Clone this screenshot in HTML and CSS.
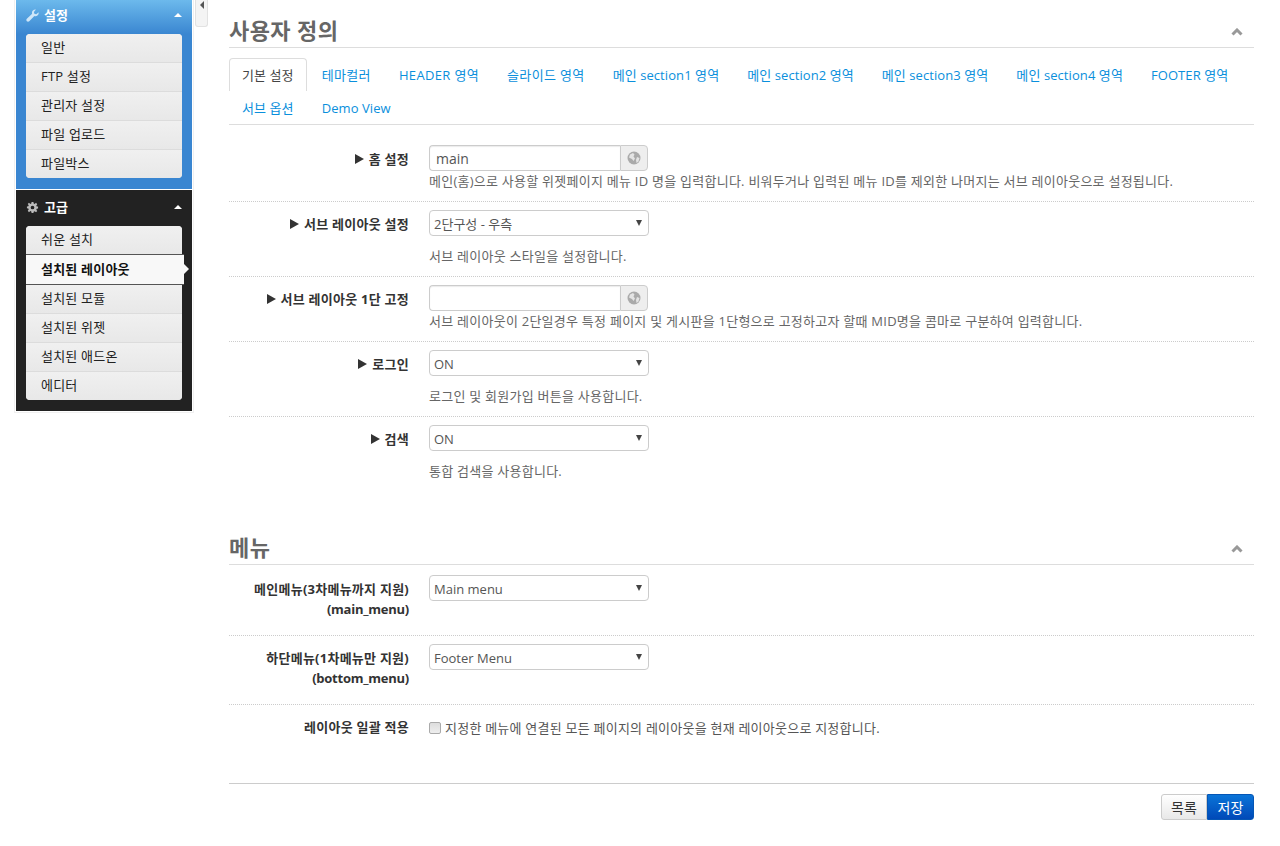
FILE: index.html
```html
<!DOCTYPE html>
<html lang="ko">
<head>
<meta charset="utf-8">
<title>사용자 정의</title>
<link rel="stylesheet" href="styles.css">
</head>
<body>
<div class="page">
  <aside class="sidebar">
    <section class="nav-group nav-blue">
      <div class="nav-head">
        <svg class="nav-icon" viewBox="0 0 14 14"><path d="M13.6 3.4c.2 1.300-.2 2.500-1 3.300-1 1-2.400 1.200-3.600.8l-5.500 5.700c-.7.700-1.900.7-2.600 0s-.7-1.900 0-2.600l5.700-5.500c-.4-1.200-.2-2.600.8-3.600.8-.8 2-1.200 3.300-1L8.500 3.200l.5 2 2 .5z" fill="#cfe6f8"/></svg>
        <span class="nav-title">설정</span>
        <i class="nav-caret"></i>
      </div>
      <ul class="nav-menu">
        <li>일반</li>
        <li>FTP 설정</li>
        <li>관리자 설정</li>
        <li>파일 업로드</li>
        <li>파일박스</li>
      </ul>
    </section>
    <section class="nav-group nav-dark">
      <div class="nav-head">
        <svg class="nav-icon" viewBox="0 0 14 14"><path fill-rule="evenodd" d="M6 1h2l.3 1.700 1 .4L10.800 2l1.300 1.400-1 1.400.4 1 1.500.2v2l-1.500.3-.4 1 1 1.400-1.300 1.400-1.500-1-1 .4L8 13H6l-.3-1.700-1-.4L3.200 12l-1.300-1.400 1-1.400-.4-1L1 7.900v-2l1.500-.2.4-1-1-1.400L3.200 2l1.500 1.100 1-.4zM7 5a2 2 0 1 0 0 4 2 2 0 0 0 0-4z" fill="#bbb"/></svg>
        <span class="nav-title">고급</span>
        <i class="nav-caret"></i>
      </div>
      <ul class="nav-menu">
        <li>쉬운 설치</li>
        <li class="active">설치된 레이아웃</li>
        <li>설치된 모듈</li>
        <li>설치된 위젯</li>
        <li>설치된 애드온</li>
        <li>에디터</li>
      </ul>
    </section>
  </aside>
  <div class="collapse-handle"><i></i></div>
  <main class="content">
    <section class="section">
      <header class="section-head">
        <h2>사용자 정의</h2>
        <svg class="section-toggle" viewBox="0 0 12 8"><path d="M1.500 6.500 6 2l4.500 4.500" fill="none" stroke="#999" stroke-width="3"/></svg>
      </header>
      <nav class="tabs">
        <a class="tab current">기본 설정</a>
        <a class="tab tab-ko">테마컬러</a>
        <a class="tab tab-ko">HEADER 영역</a>
        <a class="tab tab-ko">슬라이드 영역</a>
        <a class="tab">메인 section1 영역</a>
        <a class="tab">메인 section2 영역</a>
        <a class="tab">메인 section3 영역</a>
        <a class="tab">메인 section4 영역</a>
        <a class="tab">FOOTER 영역</a>
        <a class="tab">서브 옵션</a>
        <a class="tab">Demo View</a>
      </nav>
      <div class="row">
        <label class="row-label"><i class="mark"></i>홈 설정</label>
        <div class="row-field">
          <div class="input-group">
            <input class="text-input" type="text" value="main">
            <span class="addon"><svg viewBox="0 0 14 14"><circle cx="7" cy="7" r="6.500" fill="#aaa"/><path d="M3 3.500 6 2l1.500 1.500-1 2L8 7.500 6.500 10 5 8 2 6.500zM10 6l2.500 1-1 3.500L9.500 12l-.5-3z" fill="#e4e4e4"/></svg></span>
          </div>
          <p class="help">메인(홈)으로 사용할 위젯페이지 메뉴 ID 명을 입력합니다. 비워두거나 입력된 메뉴 ID를 제외한 나머지는 서브 레이아웃으로 설정됩니다.</p>
        </div>
      </div>
      <div class="row">
        <label class="row-label"><i class="mark"></i>서브 레이아웃 설정</label>
        <div class="row-field">
          <span class="select-wrap"><select class="select"><option>2단구성 - 우측</option></select></span>
          <p class="help">서브 레이아웃 스타일을 설정합니다.</p>
        </div>
      </div>
      <div class="row">
        <label class="row-label"><i class="mark"></i>서브 레이아웃 1단 고정</label>
        <div class="row-field">
          <div class="input-group">
            <input class="text-input" type="text" value="">
            <span class="addon"><svg viewBox="0 0 14 14"><circle cx="7" cy="7" r="6.500" fill="#aaa"/><path d="M3 3.500 6 2l1.500 1.500-1 2L8 7.500 6.500 10 5 8 2 6.500zM10 6l2.500 1-1 3.500L9.500 12l-.5-3z" fill="#e4e4e4"/></svg></span>
          </div>
          <p class="help">서브 레이아웃이 2단일경우 특정 페이지 및 게시판을 1단형으로 고정하고자 할때 MID명을 콤마로 구분하여 입력합니다.</p>
        </div>
      </div>
      <div class="row">
        <label class="row-label"><i class="mark"></i>로그인</label>
        <div class="row-field">
          <span class="select-wrap"><select class="select"><option>ON</option></select></span>
          <p class="help">로그인 및 회원가입 버튼을 사용합니다.</p>
        </div>
      </div>
      <div class="row">
        <label class="row-label"><i class="mark"></i>검색</label>
        <div class="row-field">
          <span class="select-wrap"><select class="select"><option>ON</option></select></span>
          <p class="help">통합 검색을 사용합니다.</p>
        </div>
      </div>
    </section>
    <section class="section section-menu">
      <header class="section-head">
        <h2>메뉴</h2>
        <svg class="section-toggle" viewBox="0 0 12 8"><path d="M1.500 6.500 6 2l4.500 4.500" fill="none" stroke="#999" stroke-width="3"/></svg>
      </header>
      <div class="row row-tall">
        <label class="row-label">메인메뉴(3차메뉴까지 지원)<br><span class="label-id">(main_menu)</span></label>
        <div class="row-field">
          <span class="select-wrap"><select class="select"><option>Main menu</option></select></span>
        </div>
      </div>
      <div class="row row-tall">
        <label class="row-label">하단메뉴(1차메뉴만 지원)<br><span class="label-id">(bottom_menu)</span></label>
        <div class="row-field">
          <span class="select-wrap"><select class="select"><option>Footer Menu</option></select></span>
        </div>
      </div>
      <div class="row">
        <label class="row-label">레이아웃 일괄 적용</label>
        <div class="row-field">
          <label class="check-line"><input class="check" type="checkbox">지정한 메뉴에 연결된 모든 페이지의 레이아웃을 현재 레이아웃으로 지정합니다.</label>
        </div>
      </div>
    </section>
    <footer class="actions">
      <button class="btn" type="button">목록</button>
      <button class="btn btn-primary" type="button">저장</button>
    </footer>
  </main>
</div>
</body>
</html>
```
FILE: styles.css
```css
* { box-sizing: border-box; }
html, body { margin: 0; padding: 0; height: 846px; overflow: hidden; background: #fff; }
body {
  font-family: "Open Sans", "Noto Sans CJK KR", sans-serif;
  font-size: 13px;
  line-height: 20px;
  color: #333;
}
.page { display: flex; align-items: flex-start; padding-left: 16px; }

/* sidebar */
.sidebar { width: 176px; flex: none; box-shadow: 0 0 0 1px #fff, 0 0 0 2px #f0f0f0; }
.nav-group { padding-bottom: 11px; }
.nav-blue { background: linear-gradient(#6cb9ec 0, #3a86d1 34px); height: 189px; margin-bottom: 1px; }
.nav-dark { background: #222; height: 221px; }
.nav-head { display: flex; align-items: center; height: 30px; margin-bottom: 4px; padding: 0 10px; color: #fff; font-weight: 700; }
.nav-dark .nav-head { height: 34px; margin-bottom: 2px; }
.nav-icon { width: 13px; height: 13px; margin-right: 5px; flex: none; }
.nav-title { flex: 1; }
.nav-caret { width: 0; height: 0; border: 4px solid transparent; border-bottom-color: #fff; border-top: 0; margin-right: 0; }
.nav-menu {
  list-style: none; margin: 0 10px; padding: 0;
  border-radius: 4px;
  background: linear-gradient(#f1f1f1, #e6e6e6);
}
.nav-menu li {
  height: 29px; line-height: 27px; padding-left: 15px; letter-spacing: .2px;
  color: #222; border-bottom: 1px solid #dcdcdc;
  background: linear-gradient(#f0f0f0, #e8e8e8);
}
.nav-menu li:first-child { border-radius: 4px 4px 0 0; }
.nav-menu li:last-child { height: 28px; border-bottom: 0; border-radius: 0 0 4px 4px; }
.nav-menu li.active {
  position: relative; margin-right: -2px; height: 31px; margin-top: -1px; line-height: 28px;
  background: #f8f8f8; font-weight: 700; color: #111;
  border-top: 1px solid #555; border-bottom: 1px solid #555;
}
.nav-menu li.active::after {
  content: ""; position: absolute; right: -5px; top: 9px; width: 0; height: 0;
  border-left: 5px solid #f8f8f8; border-top: 5px solid transparent; border-bottom: 5px solid transparent;
}

.collapse-handle {
  width: 13px; height: 27px; margin-left: 3px; flex: none;
  background: #f4f4f4; border: 1px solid #e2e2e2; border-top: 0; border-radius: 0 0 3px 3px;
  display: flex; justify-content: center; padding-top: 1px;
}
.collapse-handle i { width: 0; height: 0; border: 4px solid transparent; border-right: 4px solid #555; border-left: 0; height: 8px; }

/* content */
.content { width: 1025px; margin-left: 21px; flex: none; padding-top: 16px; }
.section-head {
  display: flex; justify-content: space-between; align-items: center;
  height: 32px; border-bottom: 1px solid #ddd;
}
.section-head h2 { margin: 0 0 4px; font-size: 22px; line-height: 30px; font-weight: 700; color: #666; letter-spacing: .4px; }
.section-toggle { width: 12px; height: 8px; margin-right: 11px; }
.tabs {
  display: flex; flex-wrap: wrap; align-content: flex-start; margin-top: 10px; height: 67px;
  border-bottom: 1px solid #ddd;
}
.tab {
  height: 33px; padding: 6px 12px 0; border: 1px solid transparent; border-bottom: 0;
  margin-right: 2px; color: #0a8fdc; white-space: nowrap; letter-spacing: .08px;
}
.tab-ko { letter-spacing: .35px; }
.tab.current { color: #444; border-color: #ddd; border-radius: 4px 4px 0 0; }

.row { display: flex; padding: 8px 0 10px; border-top: 1px dotted #ccc; }
.tabs + .row { border-top: 0; margin-top: 12px; }
.section-head + .row { border-top: 0; margin-top: 2px; }
.row-label { width: 180px; flex: none; padding-top: 4px; text-align: right; font-weight: 700; color: #333; white-space: nowrap; letter-spacing: .25px; }
.label-id { letter-spacing: -.25px; }
.row-field { margin-left: 20px; flex: 1; min-width: 0; }
.mark {
  display: inline-block; width: 0; height: 0; margin-right: 5px;
  border-left: 9px solid #333; border-top: 5px solid transparent; border-bottom: 5px solid transparent;
}
.row-tall { padding-bottom: 16px; }

.input-group { display: flex; width: 219px; height: 26px; }
.text-input {
  width: 191px; height: 26px; padding: 0 6px; margin: 0;
  font: 14px "Open Sans", sans-serif; color: #555;
  border: 1px solid #ccc; border-right: 0; border-radius: 4px 0 0 4px; outline: 0;
  box-shadow: inset 0 1px 1px rgba(0,0,0,.08);
}
.addon {
  width: 28px; display: flex; align-items: center; justify-content: center;
  background: #eee; border: 1px solid #ccc; border-radius: 0 4px 4px 0;
}
.addon svg { width: 14px; height: 14px; }
.help { margin: 0; color: #666; white-space: nowrap; letter-spacing: .25px; }
.select-wrap { position: relative; display: block; width: 220px; height: 26px; margin-bottom: 10px; }
.select-wrap::after {
  content: ""; position: absolute; right: 7px; top: 10px; width: 0; height: 0;
  border-top: 6px solid #444; border-left: 3px solid transparent; border-right: 3px solid transparent;
}
.select {
  display: block; width: 220px; height: 26px; margin: 0; padding: 2px 4px 0;
  appearance: none; background: #fff; border: 1px solid #ccc; border-radius: 4px;
  font: 13px "Open Sans", "Noto Sans CJK KR", sans-serif; color: #555;
}
.row-tall .select-wrap { margin-bottom: 0; }

.check-line { display: flex; align-items: center; padding-top: 5px; color: #555; white-space: nowrap; letter-spacing: .23px; }
.check {
  appearance: none; width: 12px; height: 12px; margin: 0 4px 0 0;
  background: linear-gradient(#ddd, #eee); border: 1px solid #aaa; border-radius: 2px;
}

.section-menu { margin-top: 42px; }
.actions { margin-top: 35px; padding-top: 10px; border-top: 1px solid #ccc; display: flex; justify-content: flex-end; }
.btn {
  width: 46px; height: 26px; padding: 0; margin: 0;
  font: 14px "Open Sans", "Noto Sans CJK KR", sans-serif; color: #333;
  background: linear-gradient(#fff, #e8e8e8); border: 1px solid #ccc; border-radius: 3px 0 0 3px;
}
.btn-primary { width: 47px; color: #fff; background: linear-gradient(#0a74d8, #0049b8); border-color: #0556b5; border-radius: 0 3px 3px 0; }
```
